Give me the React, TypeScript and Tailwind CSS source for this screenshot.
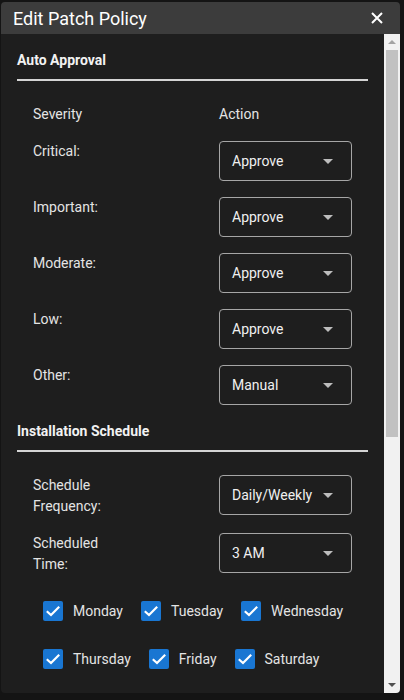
import React from 'react';

const FONT = "font-['Roboto',_'Liberation_Sans',_sans-serif]";

const severities = [
  { label: 'Critical:', value: 'Approve' },
  { label: 'Important:', value: 'Approve' },
  { label: 'Moderate:', value: 'Approve' },
  { label: 'Low:', value: 'Approve' },
  { label: 'Other:', value: 'Manual' },
];

const days = ['Monday', 'Tuesday', 'Wednesday', 'Thursday', 'Friday', 'Saturday'];

function SelectBox({ value }: { value: string }) {
  return (
    <div className="w-[133px] h-[40px] border border-[#a6a6a6] rounded-[4px] flex items-center justify-between pl-[12px] pr-[18px]">
      <span className="text-[14px] text-[#f0f0f0] whitespace-nowrap">{value}</span>
      <svg width="10" height="5" viewBox="0 0 10 5" className="shrink-0">
        <path d="M0 0 L10 0 L5 5 Z" fill="#bdbdbd" />
      </svg>
    </div>
  );
}

function SectionHeading({ title }: { title: string }) {
  return (
    <div>
      <div className="text-[14px] leading-[20px] font-bold text-[#f2f2f2]">{title}</div>
      <div className="mt-[9px] h-[2px] bg-[#d4d4d4]" />
    </div>
  );
}

function Checkbox({ label }: { label: string }) {
  return (
    <div className="flex items-center gap-[10px]">
      <div className="w-[20px] h-[20px] rounded-[2px] bg-[#1976d2] flex items-center justify-center">
        <svg width="20" height="20" viewBox="0 0 20 20">
          <path d="M3.8 10.2 L8 14 L16.2 5.8" fill="none" stroke="#ffffff" strokeWidth="2.2" />
        </svg>
      </div>
      <span className="text-[14px] leading-[20px] text-[#e4e4e4]">{label}</span>
    </div>
  );
}

export default function App() {
  return (
    <div className={`w-[404px] h-[700px] bg-[#141414] pt-[2px] pl-[1px] pr-[4px] pb-[7px] ${FONT}`}>
      <div className="w-[399px] h-full rounded-[4px] overflow-hidden flex flex-col">
        {/* Header */}
        <div className="h-[32px] shrink-0 bg-[#3c3c3c] flex items-center justify-between pl-[12px] pr-[17px]">
          <span className="text-[18px] text-white">Edit Patch Policy</span>
          <svg width="12" height="12" viewBox="0 0 12 12">
            <path d="M1 1 L11 11 M11 1 L1 11" stroke="#ffffff" strokeWidth="2" />
          </svg>
        </div>

        {/* Body */}
        <div className="flex-1 flex min-h-0 bg-[#1e1e1e]">
          <div className="flex-1 overflow-hidden px-[16px] pt-[16px]">
            <SectionHeading title="Auto Approval" />

            <div className="pl-[16px] mt-[23px] text-[14px] leading-[20px] text-[#e4e4e4]">
              <div className="grid grid-cols-[186px_133px]">
                <span>Severity</span>
                <span>Action</span>
              </div>
              <div className="mt-[17px] flex flex-col gap-[16px]">
                {severities.map((s) => (
                  <div key={s.label} className="grid grid-cols-[186px_133px] items-start">
                    <span>{s.label}</span>
                    <SelectBox value={s.value} />
                  </div>
                ))}
              </div>
            </div>

            <div className="mt-[16px]">
              <SectionHeading title="Installation Schedule" />
            </div>

            <div className="pl-[16px] mt-[23px] text-[14px] leading-[21px] text-[#e4e4e4] flex flex-col gap-[16px]">
              <div className="grid grid-cols-[186px_133px] items-start">
                <span>
                  Schedule
                  <br />
                  Frequency:
                </span>
                <SelectBox value="Daily/Weekly" />
              </div>
              <div className="grid grid-cols-[186px_133px] items-start">
                <span>
                  Scheduled
                  <br />
                  Time:
                </span>
                <SelectBox value="3 AM" />
              </div>
            </div>

            <div className="pl-[26px] mt-[26px] flex flex-wrap gap-x-[18px] gap-y-[28px]">
              {days.map((d) => (
                <Checkbox key={d} label={d} />
              ))}
            </div>
          </div>

          {/* Scrollbar */}
          <div className="w-[16px] shrink-0 bg-[#f1f1f1] flex flex-col items-center">
            <div className="h-[16px] w-full flex items-center justify-center">
              <svg width="8" height="4" viewBox="0 0 8 4">
                <path d="M0 4 L8 4 L4 0 Z" fill="#a3a3a3" />
              </svg>
            </div>
            <div className="flex-1 w-full px-[2px]">
              <div className="h-[387px] bg-[#c1c1c1]" />
            </div>
            <div className="h-[16px] w-full flex items-center justify-center">
              <svg width="8" height="4" viewBox="0 0 8 4">
                <path d="M0 0 L8 0 L4 4 Z" fill="#505050" />
              </svg>
            </div>
          </div>
        </div>
      </div>
    </div>
  );
}
